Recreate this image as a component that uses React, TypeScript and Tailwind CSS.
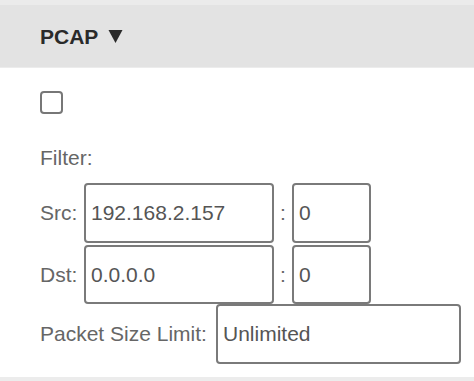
export default function App() {
  return (
    <div className="w-[474px] h-[381px] bg-white overflow-hidden flex flex-col font-['Liberation_Sans',Arial,sans-serif]">
      {/* Header */}
      <div className="h-[68px] shrink-0 bg-[#e3e3e3] border-t-[5px] border-[#ebebeb] border-b border-b-[#ececec] flex items-center pl-[40px]">
        <span className="text-[21px] font-bold text-[#2a2a2a] leading-none">PCAP</span>
        <svg className="ml-[10px]" width="15" height="14" viewBox="0 0 15 14">
          <path d="M0.5 1 L14.5 1 L7.5 14 Z" fill="#2a2a2a" />
        </svg>
      </div>

      <div className="flex-1 pl-[40px] flex flex-col">
        {/* Checkbox */}
        <div className="mt-[23px] w-[23px] h-[23px] rounded-[4px] border-2 border-[#777] bg-white" />

        <div className="mt-[33px] text-[21px] leading-none text-[#666]">Filter:</div>

        {/* Src */}
        <div className="mt-[15px] flex items-center">
          <span className="w-[44px] text-[21px] text-[#666]">Src:</span>
          <div className="w-[190px] h-[60px] rounded-[4px] border-2 border-[#7a7a7a] flex items-center pl-[5px] text-[21px] text-[#555]">
            192.168.2.157
          </div>
          <span className="w-[18px] text-center text-[21px] text-[#666]">:</span>
          <div className="w-[79px] h-[60px] rounded-[4px] border-2 border-[#7a7a7a] flex items-center pl-[5px] text-[21px] text-[#555]">
            0
          </div>
        </div>

        {/* Dst */}
        <div className="mt-[2px] flex items-center">
          <span className="w-[44px] text-[21px] text-[#666]">Dst:</span>
          <div className="w-[190px] h-[59px] rounded-[4px] border-2 border-[#7a7a7a] flex items-center pl-[5px] text-[21px] text-[#555]">
            0.0.0.0
          </div>
          <span className="w-[18px] text-center text-[21px] text-[#666]">:</span>
          <div className="w-[79px] h-[59px] rounded-[4px] border-2 border-[#7a7a7a] flex items-center pl-[5px] text-[21px] text-[#555]">
            0
          </div>
        </div>

        {/* Packet size */}
        <div className="flex items-center">
          <span className="w-[176px] text-[21px] text-[#666]">Packet Size Limit:</span>
          <div className="w-[245px] h-[60px] rounded-[4px] border-2 border-[#7a7a7a] flex items-center pl-[5px] text-[21px] text-[#555]">
            Unlimited
          </div>
        </div>
      </div>

      <div className="h-[4px] shrink-0 bg-[#ececec]" />
    </div>
  );
}
